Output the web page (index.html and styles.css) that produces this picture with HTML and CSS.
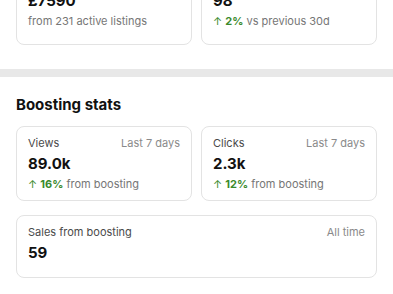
FILE: index.html
```html
<!DOCTYPE html>
<html lang="en">
<head>
    <meta charset="UTF-8">
    <meta name="viewport" content="width=device-width, initial-scale=1.0">
    <title>Seller stats</title>
    <link rel="stylesheet" href="styles.css">
</head>
<body>
    <div id="page">
        <div class="section section-top">
            <div class="card-row">
                <div class="card card-tall">
                    <div class="card-value">£7590</div>
                    <div class="card-sub">from 231 active listings</div>
                </div>
                <div class="card card-tall">
                    <div class="card-value">98</div>
                    <div class="card-sub"><span class="arrow">&#8593;</span> <span class="up">2%</span> vs previous 30d</div>
                </div>
            </div>
        </div>

        <div class="divider"></div>

        <div class="section">
            <h2>Boosting stats</h2>
            <div class="card-row">
                <div class="card">
                    <div class="card-head">
                        <span class="card-label">Views</span>
                        <span class="card-period">Last 7 days</span>
                    </div>
                    <div class="card-value">89.0k</div>
                    <div class="card-sub"><span class="arrow">&#8593;</span> <span class="up">16%</span> from boosting</div>
                </div>
                <div class="card">
                    <div class="card-head">
                        <span class="card-label">Clicks</span>
                        <span class="card-period">Last 7 days</span>
                    </div>
                    <div class="card-value">2.3k</div>
                    <div class="card-sub"><span class="arrow">&#8593;</span> <span class="up">12%</span> from boosting</div>
                </div>
            </div>
            <div class="card card-wide">
                <div class="card-head">
                    <span class="card-label">Sales from boosting</span>
                    <span class="card-period">All time</span>
                </div>
                <div class="card-value">59</div>
            </div>
        </div>
    </div>
</body>
</html>
```

FILE: styles.css
```css
html, body {
  margin: 0;
  background-color: #ffffff;
  font-family: Inter, "Noto Sans", sans-serif;
  color: #111111;
}

#page {
  margin-top: -22px;
}

.section {
  padding: 18px 16px 16px 16px;
}

.section-top {
  padding-top: 0;
  padding-bottom: 24px;
}

.divider {
  height: 8px;
  background-color: #e8e8e8;
}

h2 {
  margin: 0 0 11px 0;
  font-size: 15px;
  line-height: 20px;
  font-weight: 700;
}

.card-row {
  display: grid;
  grid-template-columns: 1fr 1fr;
  gap: 9px;
}

.card {
  border: 1px solid #e3e3e3;
  border-radius: 8px;
  padding: 9px 11px 9px 11px;
}

.card-tall {
  padding-top: 12px;
  padding-bottom: 16px;
}

.card-tall .card-value {
  margin-top: 0;
}

.card-wide {
  margin-top: 14px;
  padding-bottom: 14px;
}

.card-head {
  display: flex;
  justify-content: space-between;
  font-size: 11px;
  line-height: 14px;
}

.card-label {
  color: #4a4a4a;
}

.card-period {
  color: #8a8a8a;
}

.card-value {
  margin-top: 4px;
  font-size: 15px;
  line-height: 20px;
  font-weight: 700;
}

.card-sub {
  margin-top: 3px;
  font-size: 11px;
  line-height: 14px;
  color: #767676;
}

.arrow {
  color: #3a8a2c;
}

.up {
  color: #3a8a2c;
  font-weight: 700;
}
```
